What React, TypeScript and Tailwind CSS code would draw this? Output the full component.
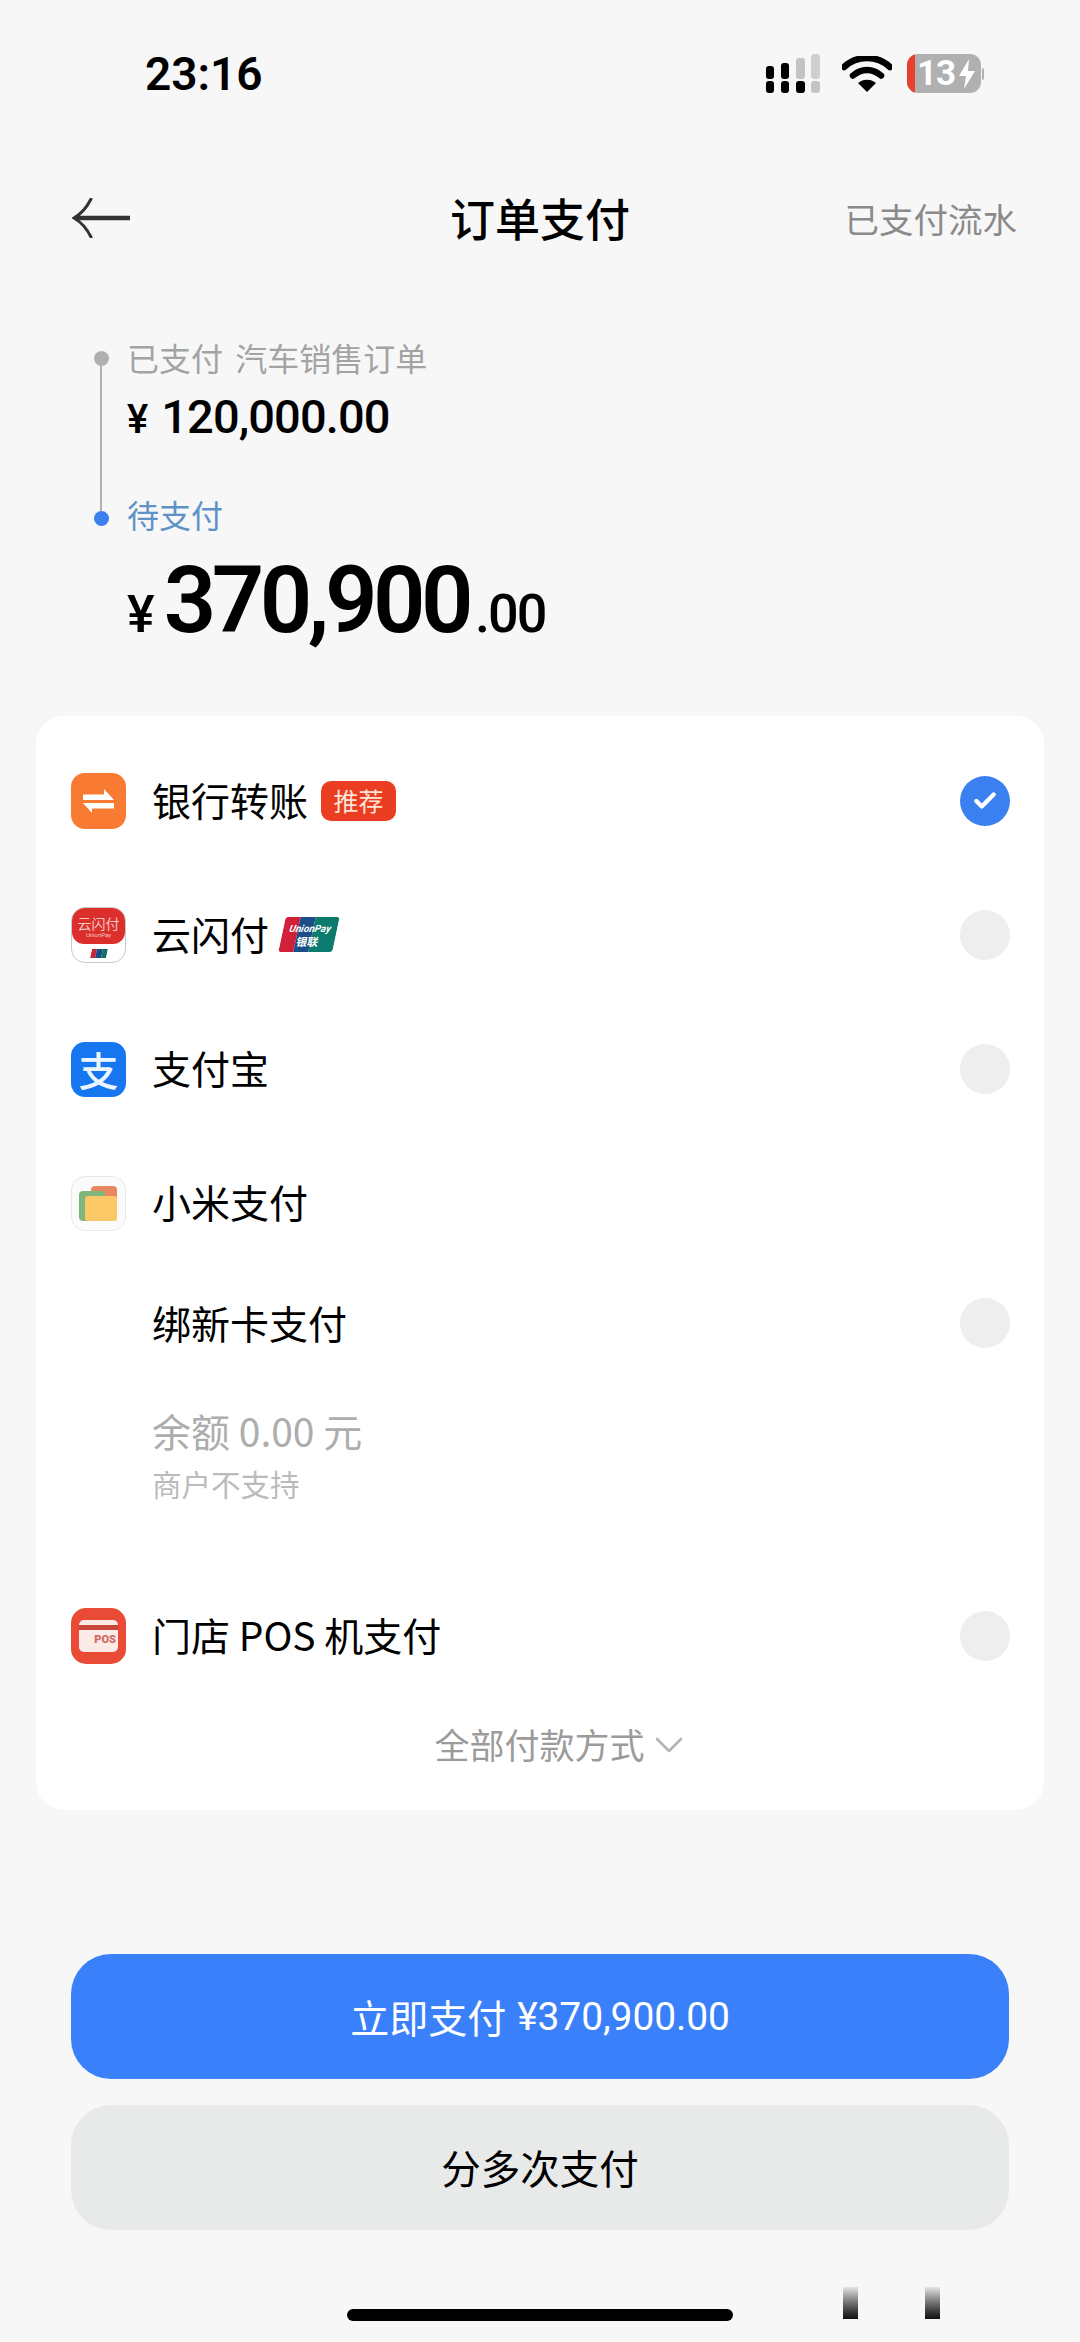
import { Check, ChevronDown } from 'lucide-react'
import type { ReactNode } from 'react'

const cjk = "font-['Noto_Sans_CJK_SC','Noto_Sans',sans-serif]"
const num = "font-['Roboto','Noto_Sans_CJK_SC',sans-serif]"

function SignalIcon() {
	return (
		<svg width="56" height="40" viewBox="0 0 56 40" className="block">
			<rect x="0" y="12" width="8" height="13" rx="3" fill="#000" />
			<rect x="15" y="9" width="8" height="16" rx="3" fill="#000" />
			<rect x="30" y="4" width="9" height="21" rx="3" fill="#c4c4c4" />
			<rect x="45" y="0" width="9" height="25" rx="3" fill="#cfcfcf" />
			<rect x="0" y="27" width="8" height="12" rx="3" fill="#000" />
			<rect x="15" y="27" width="8" height="12" rx="3" fill="#000" />
			<rect x="30" y="27" width="9" height="12" rx="3" fill="#000" />
			<rect x="45" y="27" width="9" height="12" rx="3" fill="#c4c4c4" />
		</svg>
	)
}

function WifiIcon() {
	return (
		<svg width="50" height="36" viewBox="0 0 50 36" className="block">
			<path d="M2 11 C15 -1 35 -1 48 11" fill="none" stroke="#000" strokeWidth="6.5" strokeLinecap="round" />
			<path d="M11 19.5 C19 12 31 12 39 19.5" fill="none" stroke="#000" strokeWidth="6.5" strokeLinecap="round" />
			<path d="M25 36 L16 27 C21 22.5 29 22.5 34 27 Z" fill="#000" />
		</svg>
	)
}

function BatteryIcon() {
	return (
		<div className="flex items-center">
			<div className="w-[74px] h-[39px] rounded-[11px] bg-[#b0b0b0] overflow-hidden flex items-center relative">
				<div className="w-[8px] h-full bg-[#e8402e]" />
				<span className={`${num} text-[35px] leading-[39px] font-bold text-white ml-[2px] tracking-[-1px]`}>13</span>
				<svg width="20" height="32" viewBox="0 0 20 32" className="ml-[2px]">
					<path d="M12 1 L2 18 H9 L7 31 L18 13 H11 Z" fill="#fff" />
				</svg>
			</div>
			<div className="w-[2px] h-[12px] bg-[#b0b0b0] ml-[1px] rounded-r" />
		</div>
	)
}

function BackArrow() {
	return (
		<svg width="60" height="40" viewBox="0 0 60 40" className="block">
			<path d="M19 1 C15 9 9 16 2 20 C9 24 15 31 19 39" fill="none" stroke="#333333" strokeWidth="3" strokeLinecap="round" />
			<path d="M4 20 H58" fill="none" stroke="#333333" strokeWidth="4.5" />
		</svg>
	)
}

function BankIcon() {
	return (
		<div className="w-[55px] h-[56px] rounded-[14px] bg-[#f97b33] flex items-center justify-center">
			<svg width="33" height="26" viewBox="0 0 33 26">
				<path d="M1 12 H32 L22 1 V6.5 H1 Z" fill="#fff" />
				<path d="M32 15 H1 L10 25 V20.5 H32 Z" fill="#fff" />
			</svg>
		</div>
	)
}

function CloudPayIcon() {
	return (
		<div className="w-[55px] h-[56px] rounded-[14px] overflow-hidden border border-[#c9c9c9] bg-white flex flex-col">
			<div className="h-[36px] bg-[#dc2f2c] rounded-b-[12px] flex flex-col items-center justify-center text-[#f6c9c4]">
				<span className={`${cjk} text-[14px] leading-[16px] whitespace-nowrap`}>云闪付</span>
				<span className={`${num} text-[6px] leading-[7px] whitespace-nowrap`}>UnionPay</span>
			</div>
			<div className="flex-1 flex items-center justify-center">
				<div className="w-[16px] h-[9px] -skew-x-12 flex overflow-hidden">
					<div className="flex-1 bg-[#c9243a]" />
					<div className="flex-1 bg-[#1b4a86]" />
					<div className="flex-1 bg-[#0f7268]" />
				</div>
			</div>
		</div>
	)
}

function AlipayIcon() {
	return (
		<div className="w-[55px] h-[55px] rounded-[14px] bg-[#1677f0] flex items-center justify-center">
			<span className={`${cjk} text-[40px] leading-[55px] font-medium text-[#eaf5ff]`}>支</span>
		</div>
	)
}

function MiPayIcon() {
	return (
		<div className="w-[55px] h-[55px] rounded-[14px] bg-[#fbfbfb] border border-[#e8e8e8] relative">
			<div className="absolute left-[19px] top-[9px] w-[26px] h-[34px] rounded-[4px] bg-[#e9875f]" />
			<div className="absolute left-[7px] top-[14px] w-[26px] h-[30px] rounded-[4px] bg-[#7fb67c]" />
			<div className="absolute left-[13px] top-[19px] w-[32px] h-[25px] rounded-[3px] bg-[#fbc866]" />
		</div>
	)
}

function PosIcon() {
	return (
		<div className="w-[55px] h-[56px] rounded-[15px] bg-[#ea4b37] flex items-center justify-center">
			<div className="w-[39px] h-[32px] rounded-[5px] bg-[#fbeae6] flex flex-col overflow-hidden">
				<div className="h-[5px]" />
				<div className="h-[5px] bg-[#c9473a]" />
				<div className={`${num} flex-1 text-right pr-[2px] text-[11px] leading-[19px] font-black text-[#cf6a62]`}>POS</div>
			</div>
		</div>
	)
}

function UnionPayLogo() {
	return (
		<div className="w-[54px] h-[35px] ml-[13px] -mt-[2px] -skew-x-12 rounded-[3px] overflow-hidden flex relative">
			<div className="w-[15px] bg-[#d2203a]" />
			<div className="w-[15px] bg-[#1c4d87]" />
			<div className="flex-1 bg-[#0c7a6c]" />
			<div className="absolute inset-0 flex flex-col items-center justify-center text-white">
				<span className={`${num} text-[10px] leading-[12px] italic font-bold whitespace-nowrap`}>UnionPay</span>
				<span className={`${cjk} text-[11px] leading-[12px] font-bold whitespace-nowrap`}>银联</span>
			</div>
		</div>
	)
}

function Radio({ checked }: { checked?: boolean }) {
	if (checked) {
		return (
			<div className="w-[50px] h-[50px] rounded-full bg-[#3a80f0] flex items-center justify-center">
				<Check size={26} strokeWidth={4} color="#ffffff" />
			</div>
		)
	}
	return <div className="w-[50px] h-[50px] rounded-full bg-[#eeeeee]" />
}

function Row({ icon, label, extra, checked, radio = true }: { icon: ReactNode; label: string; extra?: ReactNode; checked?: boolean; radio?: boolean }) {
	return (
		<div className="h-[134px] flex items-center">
			<div className="w-[55px] shrink-0">{icon}</div>
			<span className={`${cjk} ml-[26px] pb-[5px] text-[39px] leading-[50px] text-black whitespace-nowrap`}>{label}</span>
			{extra}
			<div className="flex-1" />
			{radio && <Radio checked={checked} />}
		</div>
	)
}

export default function App() {
	return (
		<div className="w-[1080px] h-[2342px] bg-[#f7f7f7] relative overflow-hidden flex flex-col">
			{/* status bar */}
			<div className="h-[144px] pt-[54px] pl-[145px] pr-[96px] flex items-start justify-between">
				<span className={`${num} text-[46px] leading-[40px] font-semibold text-black`}>23:16</span>
				<div className="flex items-start">
					<SignalIcon />
					<div className="ml-[20px] mt-[2px]">
						<WifiIcon />
					</div>
					<div className="ml-[15px]">
						<BatteryIcon />
					</div>
				</div>
			</div>

			{/* nav */}
			<div className="h-[148px] pl-[72px] pr-[63px] flex items-center justify-between relative">
				<BackArrow />
				<span className={`${cjk} absolute left-0 right-0 text-center text-[45px] leading-[56px] font-medium text-black`}>订单支付</span>
				<span className={`${cjk} text-[34.5px] leading-[44px] text-[#8a8a8a]`}>已支付流水</span>
			</div>

			{/* amounts */}
			<div className="h-[424px] pl-[96px] pt-[43px] flex">
				<div className="w-[10px] flex flex-col items-center pt-[16px]">
					<div className="w-[15px] h-[15px] shrink-0 rounded-full bg-[#b0b0b0]" />
					<div className="w-[2px] h-[145px] shrink-0 bg-[#b0b0b0]" />
					<div className="w-[15px] h-[15px] shrink-0 rounded-full bg-[#3a80f0]" />
				</div>
				<div className="ml-[21px] flex flex-col">
					<span className={`${cjk} text-[32px] leading-[44px] text-[#a3a3a3] whitespace-nowrap [word-spacing:5px]`}>已支付 汽车销售订单</span>
					<div className={`${num} mt-[12px] h-[52px] flex items-baseline text-black whitespace-nowrap`}>
						<span className="text-[40px] leading-[52px] font-medium">¥</span>
						<span className="ml-[13px] text-[47px] leading-[52px] font-medium tracking-[-0.9px]">120,000.00</span>
					</div>
					<span className={`${cjk} mt-[49px] text-[32px] leading-[44px] text-[#5f93c8] whitespace-nowrap`}>待支付</span>
					<div className={`${num} mt-[20px] flex items-baseline text-black whitespace-nowrap`}>
						<span className="text-[52px] leading-[90px] font-medium">¥</span>
						<span className="ml-[9px] text-[92px] leading-[90px] font-semibold tracking-[-4.5px]">370,900</span>
						<span className="ml-[6px] text-[54px] leading-[90px] font-medium tracking-[-2px]">.00</span>
					</div>
				</div>
			</div>

			{/* payment methods */}
			<div className="mx-[36px] h-[1094px] rounded-[28px] bg-white px-[35px] pr-[34px] pt-[18px] flex flex-col">
				<Row
					icon={<BankIcon />}
					label="银行转账"
					checked
					extra={
						<span className={`${cjk} ml-[13px] w-[75px] h-[40px] rounded-[10px] bg-[#ea3d22] text-[#fde3d8] text-[25px] leading-[38px] text-center`}>推荐</span>
					}
				/>
				<Row icon={<CloudPayIcon />} label="云闪付" extra={<UnionPayLogo />} />
				<Row icon={<AlipayIcon />} label="支付宝" />
				<Row icon={<MiPayIcon />} label="小米支付" radio={false} />

				<div className="h-[106px] pl-[81px] flex items-center justify-between">
					<span className={`${cjk} pb-[3px] text-[39px] leading-[50px] text-black`}>绑新卡支付</span>
					<Radio />
				</div>
				<div className="h-[193px] pl-[81px] pt-[24px] flex flex-col">
					<span className={`${cjk} text-[39px] leading-[60px] text-[#adadad]`}>余额 0.00 元</span>
					<span className={`${cjk} mt-[3px] text-[29.5px] leading-[40px] text-[#bbbbbb]`}>商户不支持</span>
				</div>

				<Row icon={<PosIcon />} label="门店 POS 机支付" />

				<div className="h-[84px] pl-[46px] flex items-center justify-center">
					<span className={`${cjk} pb-[2px] text-[35px] leading-[44px] text-[#9b9b9b]`}>全部付款方式</span>
					<ChevronDown size={48} strokeWidth={1.3} color="#b4b4b4" />
				</div>
			</div>

			{/* buttons */}
			<div className="mt-[144px] mx-[71px] flex flex-col gap-[26px]">
				<div className="h-[125px] rounded-[40px] bg-[#3a80fb] flex items-center justify-center text-white">
					<span className={`${cjk} pb-[2px] text-[39px] leading-[50px]`}>立即支付</span>
					<span className={`${num} ml-[11px] text-[39px] leading-[50px] tracking-[-0.1px]`}>¥370,900.00</span>
				</div>
				<div className="h-[125px] rounded-[40px] bg-[#e8e9e9] flex items-center justify-center">
					<span className={`${cjk} pb-[2px] text-[39.5px] leading-[50px] text-black`}>分多次支付</span>
				</div>
			</div>

			{/* home indicator */}
			<div className="mt-[79px] mx-auto w-[386px] h-[12px] rounded-full bg-black" />

			{/* watermark remains over the bottom corner */}
			<div className="absolute left-[843px] top-[2287px] w-[15px] h-[32px] bg-gradient-to-b from-[#e5e5e5] to-[#111111]" />
			<div className="absolute left-[925px] top-[2287px] w-[15px] h-[32px] bg-gradient-to-b from-[#e5e5e5] to-[#111111]" />
		</div>
	)
}
